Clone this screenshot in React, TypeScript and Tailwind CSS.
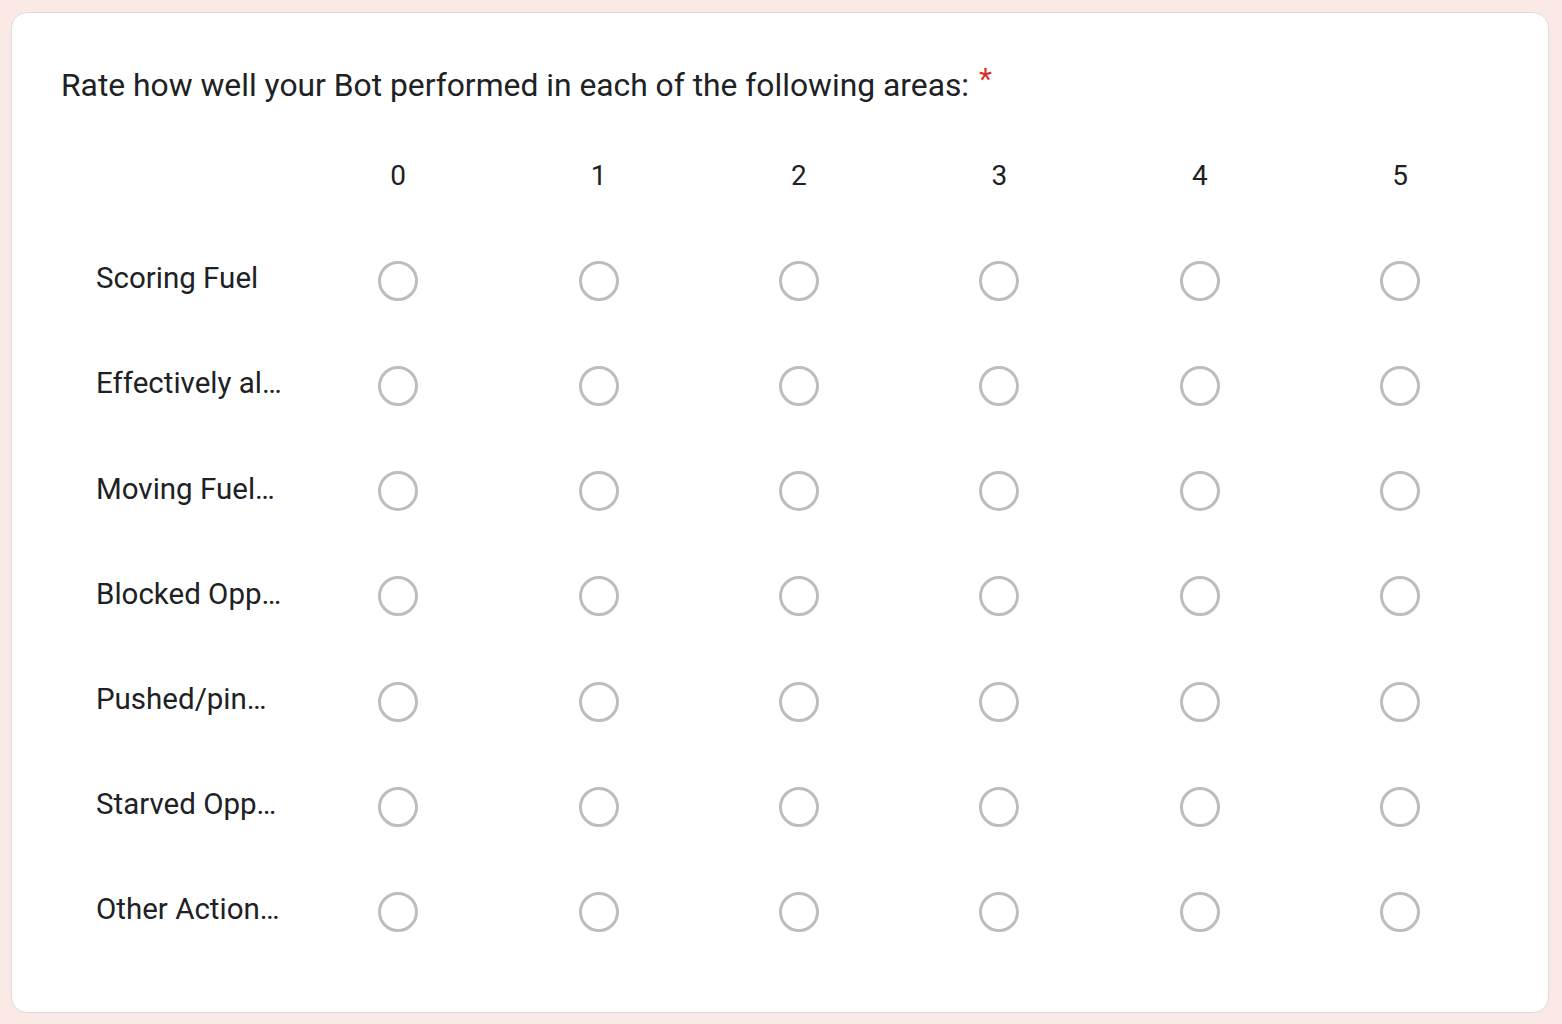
const COLUMNS = ['0', '1', '2', '3', '4', '5']
const ROWS = [
  'Scoring Fuel',
  'Effectively aligned to shoot',
  'Moving Fuel to alliance zone',
  'Blocked Opponents',
  'Pushed/pinned opponents',
  'Starved Opponents of fuel',
  'Other Actions that helped',
]

function Radio() {
  return (
    <div className="flex items-center justify-center">
      <span className="block w-[40px] h-[40px] rounded-full border-[3.5px] border-[#bdbdbd] bg-white" />
    </div>
  )
}

export default function App() {
  return (
    <div className="min-h-screen w-full bg-[#fbe9e6] pt-[12px] pl-[11px] pr-[13px] pb-[11px]" style={{ fontFamily: 'Roboto, "Liberation Sans", sans-serif' }}>
      <div className="bg-white border border-[#dadce0] rounded-[16px] h-[1001px] pl-[49px] pr-[48px] pt-[50px]">
        {/* Question title */}
        <div className="flex items-start text-[#202124] text-[31.8px] leading-[44px]">
          <span>Rate how well your Bot performed in each of the following areas:</span>
          <span className="text-[#d93025] ml-[10px] text-[30px] leading-[32px]">*</span>
        </div>

        {/* Grid */}
        <div className="mt-[16px] grid grid-cols-[237px_repeat(6,200.4px)]">
          <div className="h-[105.2px]" />
          {COLUMNS.map(c => (
            <div key={c} className="h-[105.2px] flex items-center justify-center text-[28px] text-[#202124]">{c}</div>
          ))}
          {ROWS.map(label => (
            <div key={label} className="contents">
              <div className="h-[105.2px] flex items-center pl-[35px] pb-[5px]">
                <span className="block max-w-[186px] truncate text-[29.5px] text-[#202124]">{label}</span>
              </div>
              {COLUMNS.map(c => (
                <div key={c} className="h-[105.2px] flex items-center justify-center">
                  <Radio />
                </div>
              ))}
            </div>
          ))}
        </div>
      </div>
    </div>
  )
}
